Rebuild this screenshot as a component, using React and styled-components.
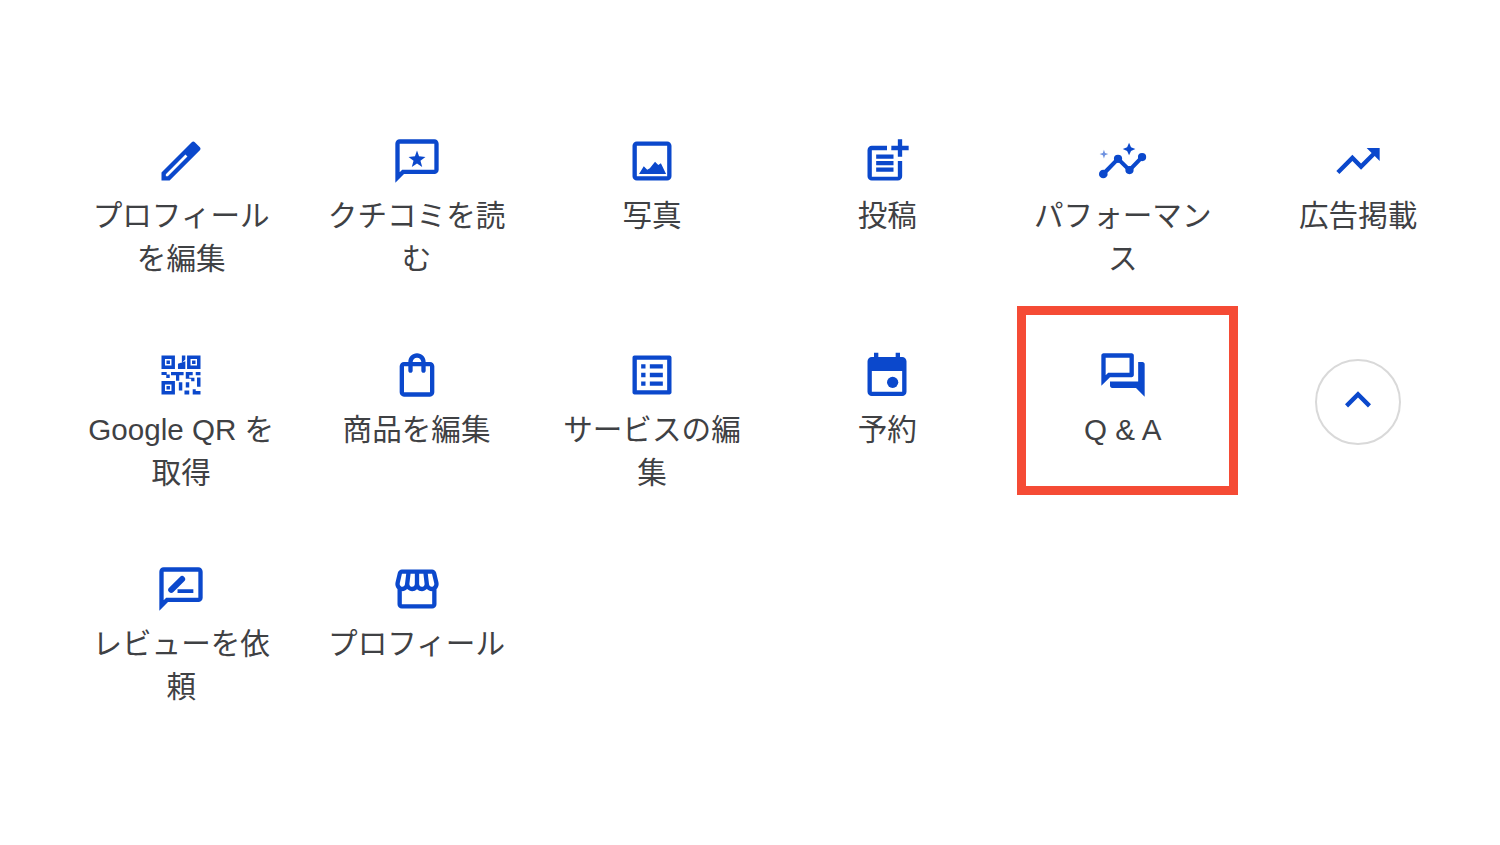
import React from "react";
import styled, { createGlobalStyle } from "styled-components";

const GlobalStyle = createGlobalStyle`
  html, body { margin: 0; padding: 0; background: #fff; }
`;

const Page = styled.main`
  box-sizing: border-box;
  width: 1500px;
  height: 845px;
  overflow: hidden;
  padding: 135px 0 0 63.5px;
  background: #fff;
  font-family: "Liberation Sans", "Noto Sans CJK JP", sans-serif;
`;

const Grid = styled.div`
  display: grid;
  grid-template-columns: repeat(6, 235.4px);
  grid-auto-rows: 146px;
  row-gap: 68px;
`;

const Action = styled.div`
  position: relative;
  display: flex;
  flex-direction: column;
  align-items: center;
  gap: 7px;
`;

const IconSvg = styled.svg`
  display: block;
  width: 52px;
  height: 52px;
  fill: #0b48cc;
  flex: none;
`;

const Label = styled.span`
  width: 192px;
  text-align: center;
  font-size: 29.6px;
  line-height: 43px;
  color: #3f4144;
`;

const Highlight = styled.div`
  position: absolute;
  left: 12px;
  top: -43px;
  width: 221px;
  height: 189px;
  box-sizing: border-box;
  border: 9px solid #f54b35;
  pointer-events: none;
`;

const ExpandButton = styled.button`
  box-sizing: border-box;
  width: 86px;
  height: 86px;
  margin-top: 10px;
  padding: 0 0 4px;
  display: flex;
  align-items: center;
  justify-content: center;
  background: #fff;
  border: 2px solid #d9d9d9;
  border-radius: 50%;
`;

const paths = {
  edit: (
    <path fillRule="evenodd" d="M3 17.25V21h3.75L20.71 7.04c.39-.39.39-1.02 0-1.41l-2.34-2.34c-.39-.39-1.02-.39-1.41 0L3 17.25zM5 19v-.92l9.06-9.06.92.92L5.92 19H5z" />
  ),
  review: (
    <>
      <path d="M20 2H4c-1.1 0-2 .9-2 2v18l4-4h14c1.1 0 2-.9 2-2V4c0-1.1-.9-2-2-2zm0 14H5.17L4 17.17V4h16v12z" />
      <path d="M12 7.2l.95 2.6 2.95.3-2.3 1.8.8 2.9L12 13.2l-2.4 1.6.8-2.9-2.3-1.8 2.95-.3z" />
    </>
  ),
  image: (
    <>
      <path d="M19 5v14H5V5h14m0-2H5c-1.1 0-2 .9-2 2v14c0 1.1.9 2 2 2h14c1.1 0 2-.9 2-2V5c0-1.1-.9-2-2-2z" />
      <path d="M6 18l2.2-3.6 1.6 1.6 1.2-.6 2.4-3 1.5 1.4 1.2-.8L18.5 18z" />
    </>
  ),
  post: (
    <path d="M17 19.22H5V7h7V5H5c-1.1 0-2 .9-2 2v12c0 1.1.9 2 2 2h12c1.1 0 2-.9 2-2v-7h-2v7.22zM19 2h-2v3h-3c.01.01 0 2 0 2h3v2.99c.01.01 2 0 2 0V7h3V5h-3V2zM7 9h8v2H7zM7 12v2h8v-2zM7 15h8v2H7z" />
  ),
  performance: (
    <>
      <path d="M2.9 18l6.8-7 5.3 5.2 5.8-6" fill="none" stroke="#0b48cc" strokeWidth="1.9" />
      <circle cx="2.9" cy="18" r="2" />
      <circle cx="9.7" cy="11" r="1.9" />
      <circle cx="15" cy="16.2" r="1.9" />
      <circle cx="20.8" cy="10.2" r="1.9" />
      <path d="M14.8 3.6l.9 2 2 .9-2 .9-.9 2-.9-2-2-.9 2-.9z" />
      <path opacity=".6" d="M3.2 6.8l.5 1.5 1.5.5-1.5.5-.5 1.5-.5-1.5-1.5-.5 1.5-.5z" />
    </>
  ),
  trending: (
    <path d="M16 6l2.29 2.29-4.88 4.88-4-4L2 16.59 3.41 18l6-6 4 4 6.3-6.29L22 12V6z" />
  ),
  qr: (
    <path fillRule="evenodd" d="M3 3h6.2v6.2H3zm1.6 1.6v3h3v-3zM5.3 5.3h1.6v1.6H5.3zM14.8 3H21v6.2h-6.2zm1.6 1.6v3h3v-3zM17.1 5.3h1.6v1.6h-1.6zM3 14.8h6.2V21H3zm1.6 1.6v3h3v-3zM5.3 17.1h1.6v1.6H5.3zM12.4 3h1.6v1.8l-1.6 1.6zM10.6 6.8l3.4-1.2v3.6h-3.4zM3 10.6h2.4v1.2h1.4v1.6H5.2v-1.4H3zM7.4 10.6h5.8v1.5h-2v2.6H9.7v-2.6H7.4zM14.2 10.6h3.2v1.5h-1.6v1.2h2.4v1.6h-1.5v-1.2h-2.5zM18.8 10.6H21v1.5h-2.2zM19.4 13.2H21v4.2h-1.6zM11 15.4h1.6v3.8H11zM14.2 15.4h1.6v2.4h-1.6zM13.6 19.2h2.2V21h-2.2zM17.4 18.6h1.4v.8H21V21h-3.6z" />
  ),
  bag: (
    <path d="M18 6h-2c0-2.21-1.79-4-4-4S8 3.79 8 6H6c-1.1 0-2 .9-2 2v12c0 1.1.9 2 2 2h12c1.1 0 2-.9 2-2V8c0-1.1-.9-2-2-2zm-6-2c1.1 0 2 .9 2 2h-4c0-1.1.9-2 2-2zm6 16H6V8h2v2c0 .55.45 1 1 1s1-.45 1-1V8h4v2c0 .55.45 1 1 1s1-.45 1-1V8h2v12z" />
  ),
  list: (
    <path d="M19 5v14H5V5h14m1.1-2H3.9c-.5 0-.9.4-.9.9v16.2c0 .4.4.9.9.9h16.2c.4 0 .9-.5.9-.9V3.9c0-.5-.5-.9-.9-.9zM11 7h6v2h-6V7zm0 4h6v2h-6v-2zm0 4h6v2h-6zM7 7h2v2H7zm0 4h2v2H7zm0 4h2v2H7z" />
  ),
  event: (
    <g transform="translate(0 .7)">
      <path d="M16 1v2H8V1H6v2H5c-1.11 0-1.99.9-1.99 2L3 19c0 1.1.89 2 2 2h14c1.1 0 2-.9 2-2V5c0-1.1-.9-2-2-2h-1V1h-2zm3 18H5V9.5h14V19z" />
      <circle cx="14.6" cy="14.7" r="2.6" />
    </g>
  ),
  forum: (
    <path d="M15 4v7H5.17L4 12.17V4h11m1-2H3c-.55 0-1 .45-1 1v14l4-4h10c.55 0 1-.45 1-1V3c0-.55-.45-1-1-1zm5 4h-2v9H6v2c0 .55.45 1 1 1h11l4 4V7c0-.55-.45-1-1-1z" />
  ),
  rate: (
    <>
      <path d="M20 2H4c-1.1 0-2 .9-2 2v18l4-4h14c1.1 0 2-.9 2-2V4c0-1.1-.9-2-2-2zm0 14H5.17L4 17.17V4h16v12z" />
      <path d="M7.5 12.4l5-5" fill="none" stroke="#0b48cc" strokeWidth="2.8" strokeLinecap="round" />
      <path d="M10.4 12.1h7.3v1.7h-7.3z" />
    </>
  ),
  store: (
    <path d="M21.9 8.89l-1.05-4.37c-.22-.9-1-1.52-1.91-1.52H5.05c-.9 0-1.69.63-1.9 1.52L2.1 8.89c-.24 1.02-.02 2.06.62 2.88.08.11.19.19.28.29V19c0 1.1.9 2 2 2h14c1.1 0 2-.9 2-2v-6.94c.09-.09.2-.18.28-.28.64-.82.87-1.87.62-2.89zm-2.99-3.9l1.05 4.37c.1.42.01.84-.25 1.17-.14.18-.44.47-.94.47-.61 0-1.14-.49-1.21-1.14L16.98 5l1.93-.01zM13 5h1.96l.54 4.52c.05.39-.07.78-.33 1.07-.22.26-.54.41-.95.41-.67 0-1.22-.59-1.22-1.31V5zM8.49 9.52L9.04 5H11v4.69c0 .72-.55 1.31-1.29 1.31-.34 0-.65-.15-.89-.41-.25-.29-.37-.68-.33-1.07zm-4.45-.16L5.05 5h1.97l-.58 4.86c-.08.65-.6 1.14-1.21 1.14-.49 0-.8-.29-.93-.47-.27-.32-.36-.75-.26-1.17zM5 19v-6.03c.08.01.15.03.23.03.87 0 1.66-.36 2.24-.95.6.6 1.4.95 2.31.95.87 0 1.65-.36 2.23-.93.59.57 1.39.93 2.29.93.84 0 1.64-.35 2.24-.95.58.59 1.37.95 2.24.95.08 0 .15-.02.23-.03V19H5z" />
  ),
  chevron: <path d="M12 8l-6 6 1.41 1.41L12 10.83l4.59 4.58L18 14z" />,
};

const Icon = ({ name }) => <IconSvg viewBox="0 0 24 24">{paths[name]}</IconSvg>;

const actions = [
  { icon: "edit", label: "プロフィールを編集" },
  { icon: "review", label: "クチコミを読む" },
  { icon: "image", label: "写真" },
  { icon: "post", label: "投稿" },
  { icon: "performance", label: "パフォーマンス" },
  { icon: "trending", label: "広告掲載" },
  { icon: "qr", label: "Google QR を取得" },
  { icon: "bag", label: "商品を編集" },
  { icon: "list", label: "サービスの編集" },
  { icon: "event", label: "予約" },
  { icon: "forum", label: "Q & A", highlighted: true },
  { expand: true },
  { icon: "rate", label: "レビューを依頼" },
  { icon: "store", label: "プロフィール" },
];

export default function App() {
  return (
    <Page>
      <GlobalStyle />
      <Grid>
        {actions.map((a, i) =>
          a.expand ? (
            <Action key={i}>
              <ExpandButton aria-label="閉じる">
                <Icon name="chevron" />
              </ExpandButton>
            </Action>
          ) : (
            <Action key={i}>
              <Icon name={a.icon} />
              <Label>{a.label}</Label>
              {a.highlighted && <Highlight />}
            </Action>
          )
        )}
      </Grid>
    </Page>
  );
}
